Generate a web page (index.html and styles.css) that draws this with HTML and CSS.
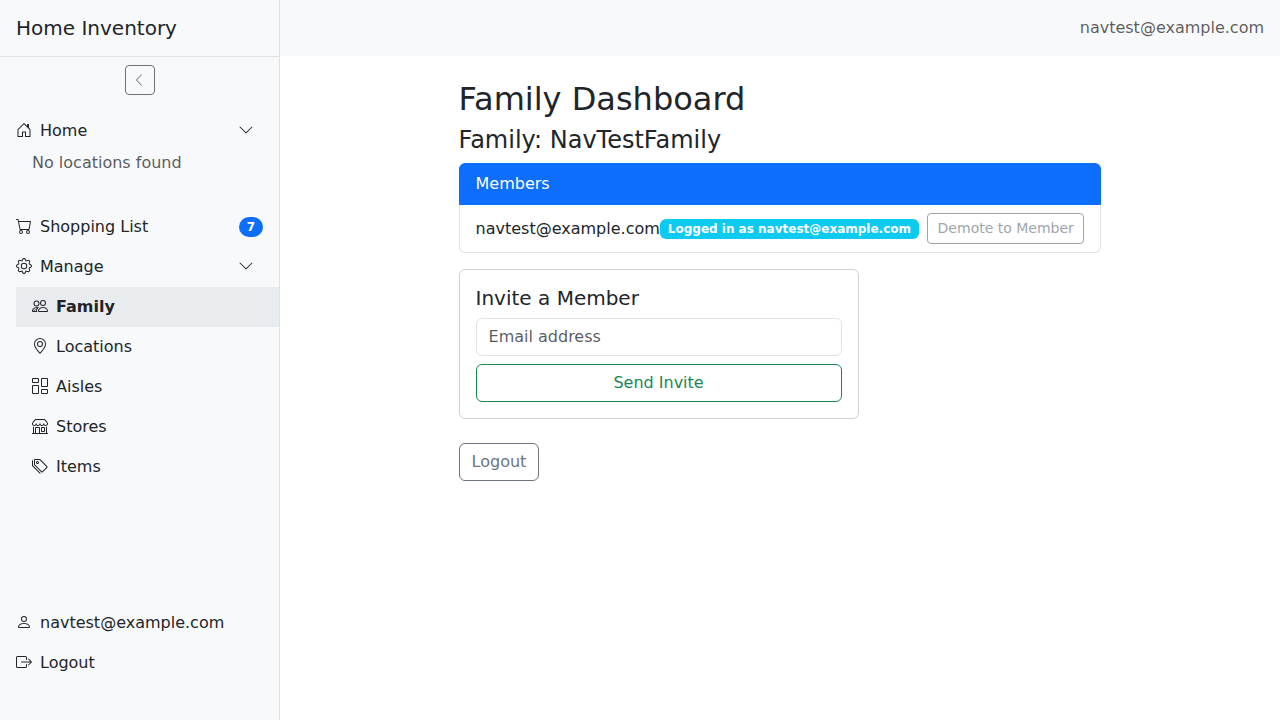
FILE: index.html
```html
<!DOCTYPE html>
<html lang="en">
<head>
<meta charset="utf-8">
<title>Family Dashboard</title>
<link rel="stylesheet" href="styles.css">
</head>
<body>
<div class="layout">
  <aside class="sidebar">
    <div class="brand">Home Inventory</div>
    <div class="collapse-row">
      <button class="collapse-btn" type="button" aria-label="Collapse sidebar"><svg class="icon icon-sm" viewBox="0 0 16 16"><path d="M11.354 1.646a.5.5 0 0 1 0 .708L5.707 8l5.647 5.646a.5.5 0 0 1-.708.708l-6-6a.5.5 0 0 1 0-.708l6-6a.5.5 0 0 1 .708 0"/></svg></button>
    </div>
    <nav class="nav">
      <a class="nav-link"><span><svg class="icon lead" viewBox="0 0 16 16"><path fill-rule="evenodd" d="M8.354 1.146a.5.5 0 0 0-.708 0l-6 6A.5.5 0 0 0 1.5 7.5v7a.5.5 0 0 0 .5.5h4.5a.5.5 0 0 0 .5-.5v-4h2v4a.5.5 0 0 0 .5.5H14a.5.5 0 0 0 .5-.5v-7a.5.5 0 0 0-.146-.354L13 5.793V2.5a.5.5 0 0 0-.5-.5h-1a.5.5 0 0 0-.5.5v1.293zM2.5 14V7.707l5.5-5.5 5.5 5.5V14H10v-4a.5.5 0 0 0-.5-.5h-3a.5.5 0 0 0-.5.5v4z"/></svg>Home</span><span class="toggle"><svg class="icon" viewBox="0 0 16 16"><path d="M1.646 4.646a.5.5 0 0 1 .708 0L8 10.293l5.646-5.647a.5.5 0 0 1 .708.708l-6 6a.5.5 0 0 1-.708 0l-6-6a.5.5 0 0 1 0-.708"/></svg></span></a>
      <div class="empty">No locations found</div>
      <a class="nav-link"><span><svg class="icon lead" viewBox="0 0 16 16"><path d="M0 1.5A.5.5 0 0 1 .5 1H2a.5.5 0 0 1 .485.379L2.89 3H14.5a.5.5 0 0 1 .491.592l-1.5 8A.5.5 0 0 1 13 12H4a.5.5 0 0 1-.491-.408L2.01 3.607 1.61 2H.5a.5.5 0 0 1-.5-.5M3.102 4l1.313 7h8.17l1.313-7zM5 12a2 2 0 1 0 0 4 2 2 0 0 0 0-4m7 0a2 2 0 1 0 0 4 2 2 0 0 0 0-4m-7 1a1 1 0 1 1 0 2 1 1 0 0 1 0-2m7 0a1 1 0 1 1 0 2 1 1 0 0 1 0-2"/></svg>Shopping List</span><span class="badge badge-pill">7</span></a>
      <a class="nav-link"><span><svg class="icon lead" viewBox="0 0 16 16"><path d="M8 4.754a3.246 3.246 0 1 0 0 6.492 3.246 3.246 0 0 0 0-6.492M5.754 8a2.246 2.246 0 1 1 4.492 0 2.246 2.246 0 0 1-4.492 0"/><path d="M9.796 1.343c-.527-1.79-3.065-1.79-3.592 0l-.094.319a.873.873 0 0 1-1.255.52l-.292-.16c-1.64-.892-3.433.902-2.54 2.541l.159.292a.873.873 0 0 1-.52 1.255l-.319.094c-1.79.527-1.79 3.065 0 3.592l.319.094a.873.873 0 0 1 .52 1.255l-.16.292c-.892 1.64.901 3.434 2.541 2.54l.292-.159a.873.873 0 0 1 1.255.52l.094.319c.527 1.79 3.065 1.79 3.592 0l.094-.319a.873.873 0 0 1 1.255-.52l.292.16c1.64.893 3.434-.902 2.54-2.541l-.159-.292a.873.873 0 0 1 .52-1.255l.319-.094c1.79-.527 1.79-3.065 0-3.592l-.319-.094a.873.873 0 0 1-.52-1.255l.16-.292c.893-1.64-.902-3.433-2.541-2.54l-.292.159a.873.873 0 0 1-1.255-.52zm-2.633.283c.246-.835 1.428-.835 1.674 0l.094.319a1.873 1.873 0 0 0 2.693 1.115l.291-.16c.764-.415 1.6.42 1.184 1.185l-.159.292a1.873 1.873 0 0 0 1.116 2.692l.318.094c.835.246.835 1.428 0 1.674l-.319.094a1.873 1.873 0 0 0-1.115 2.693l.16.291c.415.764-.42 1.6-1.185 1.184l-.291-.159a1.873 1.873 0 0 0-2.693 1.116l-.094.318c-.246.835-1.428.835-1.674 0l-.094-.319a1.873 1.873 0 0 0-2.692-1.115l-.292.16c-.764.415-1.6-.42-1.184-1.185l.159-.291A1.873 1.873 0 0 0 1.945 8.93l-.319-.094c-.835-.246-.835-1.428 0-1.674l.319-.094A1.873 1.873 0 0 0 3.06 4.377l-.16-.292c-.415-.764.42-1.6 1.185-1.184l.292.159a1.873 1.873 0 0 0 2.692-1.115z"/></svg>Manage</span><span class="toggle"><svg class="icon" viewBox="0 0 16 16"><path d="M1.646 4.646a.5.5 0 0 1 .708 0L8 10.293l5.646-5.647a.5.5 0 0 1 .708.708l-6 6a.5.5 0 0 1-.708 0l-6-6a.5.5 0 0 1 0-.708"/></svg></span></a>
      <div class="subnav">
        <a class="nav-link active"><span><svg class="icon lead" viewBox="0 0 16 16"><path d="M15 14s1 0 1-1-1-4-5-4-5 3-5 4 1 1 1 1zm-7.978-1L7 12.996c.001-.264.167-1.03.76-1.72C8.312 10.629 9.282 10 11 10c1.717 0 2.687.63 3.24 1.276.593.69.758 1.457.76 1.72l-.008.002-.014.002zM11 7a2 2 0 1 0 0-4 2 2 0 0 0 0 4m3-2a3 3 0 1 1-6 0 3 3 0 0 1 6 0M6.936 9.28a6 6 0 0 0-1.23-.247A7 7 0 0 0 5 9c-4 0-5 3-5 4q0 1 1 1h4.216A2.24 2.24 0 0 1 5 13c0-1.01.377-2.042 1.09-2.904.243-.294.526-.569.846-.816M4.92 10A5.5 5.5 0 0 0 4 13H1c0-.26.164-1.03.76-1.724.545-.636 1.492-1.256 3.16-1.275ZM1.5 5.5a3 3 0 1 1 6 0 3 3 0 0 1-6 0m3-2a2 2 0 1 0 0 4 2 2 0 0 0 0-4"/><path d="M1 13 4.92 10 4 11.6 2.4 13z" opacity=".7"/></svg>Family</span></a>
        <a class="nav-link"><span><svg class="icon lead" viewBox="0 0 16 16"><path d="M12.166 8.94c-.524 1.062-1.234 2.12-1.96 3.07A32 32 0 0 1 8 14.58a32 32 0 0 1-2.206-2.57c-.726-.95-1.436-2.008-1.96-3.07C3.304 7.867 3 6.862 3 6a5 5 0 0 1 10 0c0 .862-.305 1.867-.834 2.94M8 16s6-5.686 6-10A6 6 0 0 0 2 6c0 4.314 6 10 6 10"/><path d="M8 8a2 2 0 1 1 0-4 2 2 0 0 1 0 4m0 1a3 3 0 1 0 0-6 3 3 0 0 0 0 6"/></svg>Locations</span></a>
        <a class="nav-link"><span><svg class="icon lead" viewBox="0 0 16 16"><path d="M6 1v3H1V1zM1 0a1 1 0 0 0-1 1v3a1 1 0 0 0 1 1h5a1 1 0 0 0 1-1V1a1 1 0 0 0-1-1zm14 12v3h-5v-3zm-5-1a1 1 0 0 0-1 1v3a1 1 0 0 0 1 1h5a1 1 0 0 0 1-1v-3a1 1 0 0 0-1-1zM6 8v7H1V8zM1 7a1 1 0 0 0-1 1v7a1 1 0 0 0 1 1h5a1 1 0 0 0 1-1V8a1 1 0 0 0-1-1zm14-6v7h-5V1zm-5-1a1 1 0 0 0-1 1v7a1 1 0 0 0 1 1h5a1 1 0 0 0 1-1V1a1 1 0 0 0-1-1z"/></svg>Aisles</span></a>
        <a class="nav-link"><span><svg class="icon lead" viewBox="0 0 16 16"><path d="M2.97 1.35A1 1 0 0 1 3.73 1h8.54a1 1 0 0 1 .76.35l2.609 3.044A1.5 1.5 0 0 1 16 5.37v.255a2.375 2.375 0 0 1-4.25 1.458A2.37 2.37 0 0 1 9.875 8 2.37 2.37 0 0 1 8 7.083 2.37 2.37 0 0 1 6.125 8a2.37 2.37 0 0 1-1.875-.917A2.375 2.375 0 0 1 0 5.625V5.37a1.5 1.5 0 0 1 .361-.976zm1.78 4.275a1.375 1.375 0 0 0 2.75 0 .5.5 0 0 1 1 0 1.375 1.375 0 0 0 2.75 0 .5.5 0 0 1 1 0 1.375 1.375 0 1 0 2.75 0V5.37a.5.5 0 0 0-.12-.325L12.27 2H3.73L1.12 5.045A.5.5 0 0 0 1 5.37v.255a1.375 1.375 0 0 0 2.75 0 .5.5 0 0 1 1 0M1.5 8.5A.5.5 0 0 1 2 9v6h1v-5a1 1 0 0 1 1-1h3a1 1 0 0 1 1 1v5h6V9a.5.5 0 0 1 1 0v6h.5a.5.5 0 0 1 0 1H.5a.5.5 0 0 1 0-1H1V9a.5.5 0 0 1 .5-.5M4 15h3v-5H4zm5-5a1 1 0 0 1 1-1h2a1 1 0 0 1 1 1v3a1 1 0 0 1-1 1h-2a1 1 0 0 1-1-1zm3 0h-2v3h2z"/></svg>Stores</span></a>
        <a class="nav-link"><span><svg class="icon lead" viewBox="0 0 16 16"><path d="M3 2v4.586l7 7L14.586 9l-7-7zM2 2a1 1 0 0 1 1-1h4.586a1 1 0 0 1 .707.293l7 7a1 1 0 0 1 0 1.414l-4.586 4.586a1 1 0 0 1-1.414 0l-7-7A1 1 0 0 1 2 6.586z"/><path d="M5.5 5a.5.5 0 1 1 0-1 .5.5 0 0 1 0 1m0 1a1.5 1.5 0 1 0 0-3 1.5 1.5 0 0 0 0 3M1 7.086a1 1 0 0 0 .293.707L8.75 15.25l-.043.043a1 1 0 0 1-1.414 0l-7-7A1 1 0 0 1 0 7.586V3a1 1 0 0 1 1-1z"/></svg>Items</span></a>
      </div>
    </nav>
    <div class="account">
      <a class="nav-link"><span><svg class="icon lead" viewBox="0 0 16 16"><path d="M8 8a3 3 0 1 0 0-6 3 3 0 0 0 0 6m2-3a2 2 0 1 1-4 0 2 2 0 0 1 4 0m4 8c0 1-1 1-1 1H3s-1 0-1-1 1-4 6-4 6 3 6 4m-1-.004c-.001-.246-.154-.986-.832-1.664C11.516 10.68 10.289 10 8 10s-3.516.68-4.168 1.332c-.678.678-.83 1.418-.832 1.664z"/></svg>navtest@example.com</span></a>
      <a class="nav-link"><span><svg class="icon lead" viewBox="0 0 16 16"><path d="M10 12.5a.5.5 0 0 1-.5.5h-8a.5.5 0 0 1-.5-.5v-9a.5.5 0 0 1 .5-.5h8a.5.5 0 0 1 .5.5v2a.5.5 0 0 0 1 0v-2A1.5 1.5 0 0 0 9.5 2h-8A1.5 1.5 0 0 0 0 3.5v9A1.5 1.5 0 0 0 1.5 14h8a1.5 1.5 0 0 0 1.5-1.5v-2a.5.5 0 0 0-1 0z"/><path d="M15.854 8.354a.5.5 0 0 0 0-.708l-3-3a.5.5 0 0 0-.708.708L14.293 7.5H5.5a.5.5 0 0 0 0 1h8.793l-2.147 2.146a.5.5 0 0 0 .708.708z"/></svg>Logout</span></a>
    </div>
  </aside>
  <div class="page">
    <header class="topbar"><span>navtest@example.com</span></header>
    <main class="content">
      <h1 class="title">Family Dashboard</h1>
      <h2 class="subtitle">Family: NavTestFamily</h2>
      <section class="members">
        <div class="members-header">Members</div>
        <div class="member">
          <span>navtest@example.com</span>
          <span class="badge badge-info">Logged in as navtest@example.com</span>
          <button class="btn btn-secondary btn-sm" type="button" disabled>Demote to Member</button>
        </div>
      </section>
      <section class="invite">
        <h3 class="invite-title">Invite a Member</h3>
        <input class="field" type="email" placeholder="Email address">
        <button class="btn btn-success" type="button">Send Invite</button>
      </section>
      <button class="btn btn-secondary" type="button">Logout</button>
    </main>
  </div>
</div>
</body>
</html>
```
FILE: styles.css
```css
*, *::before, *::after { box-sizing: border-box; }

body {
  margin: 0;
  font-family: "DejaVu Sans", sans-serif;
  font-size: 16px;
  line-height: 1.5;
  color: #212529;
  background: #fff;
}

h1, h2, h3 { margin: 0 0 8px; font-weight: 400; line-height: 1.2; }

.layout { display: flex; height: 100vh; overflow: hidden; }

.sidebar {
  display: flex;
  flex-direction: column;
  flex: none;
  width: 280px;
  background: #f8f9fa;
  border-right: 1px solid #dee2e6;
}

.brand {
  height: 57px;
  padding: 13px 16px;
  font-size: 20px;
  border-bottom: 1px solid #dee2e6;
}

.collapse-row { display: flex; justify-content: center; padding: 8px 0; }

.collapse-btn {
  display: flex;
  align-items: center;
  justify-content: center;
  width: 30px;
  height: 30px;
  padding: 0 1px 0 0;
  font: inherit;
  font-size: 14px;
  color: #6c757d;
  background: transparent;
  border: 1px solid #6c757d;
  border-radius: 4px;
}

.icon { width: 1em; height: 1em; fill: currentColor; vertical-align: -.125em; }
.lead { margin-right: 8px; }

.nav { padding-top: 8px; flex: 1; }

.nav-link {
  display: flex;
  align-items: center;
  justify-content: space-between;
  height: 40px;
  padding: 8px 16px;
}

.toggle { padding-right: 9px; }
.empty { padding-left: 32px; margin-bottom: 32px; color: rgba(33, 37, 41, .75); }
.subnav { margin-left: 16px; }
.active { font-weight: 700; background: #e9ecef; }
.account { padding-bottom: 37px; }

.badge {
  padding: 4px 8px;
  font-size: 12px;
  font-weight: 700;
  line-height: 12px;
  color: #fff;
  white-space: nowrap;
  border-radius: 6px;
}
.badge-pill { background: #0d6efd; border-radius: 10px; }
.badge-info { margin-right: 8px; background: #0dcaf0; }

.page { flex: 1; }

.topbar {
  display: flex;
  align-items: center;
  justify-content: flex-end;
  height: 56px;
  padding: 0 16px;
  color: rgba(0, 0, 0, .65);
  background: #f8f9fa;
}

.content { width: fit-content; margin: 0 auto; padding-top: 24px; }
.title { font-size: 32px; }
.subtitle { font-size: 24px; }

.members { margin-bottom: 16px; }

.members-header {
  padding: 8px 16px;
  color: #fff;
  background: #0d6efd;
  border: 1px solid #0d6efd;
  border-radius: 6px 6px 0 0;
}

.member {
  display: flex;
  align-items: center;
  justify-content: space-between;
  padding: 8px 16px;
  border: 1px solid #dee2e6;
  border-top: 0;
  border-radius: 0 0 6px 6px;
}

.invite {
  display: flex;
  flex-direction: column;
  width: 400px;
  padding: 16px;
  margin-bottom: 24px;
  border: 1px solid rgba(0, 0, 0, .175);
  border-radius: 6px;
}
.invite-title { font-size: 20px; }

.field {
  height: 38px;
  padding: 5px 12px 7px;
  margin-bottom: 8px;
  font: inherit;
  background: #fff;
  border: 1px solid #dee2e6;
  border-radius: 6px;
}
.field::placeholder { color: rgba(33, 37, 41, .75); opacity: 1; }

.btn {
  padding: 6px 12px;
  font: inherit;
  color: var(--tone);
  background: transparent;
  border: 1px solid var(--tone);
  border-radius: 6px;
}
.btn:disabled { opacity: .65; }
.btn-secondary { --tone: #6c757d; }
.btn-success { --tone: #198754; }
.btn-sm { padding: 4px 9.6px; font-size: 14px; line-height: 21px; border-radius: 4px; white-space: nowrap; }
```
